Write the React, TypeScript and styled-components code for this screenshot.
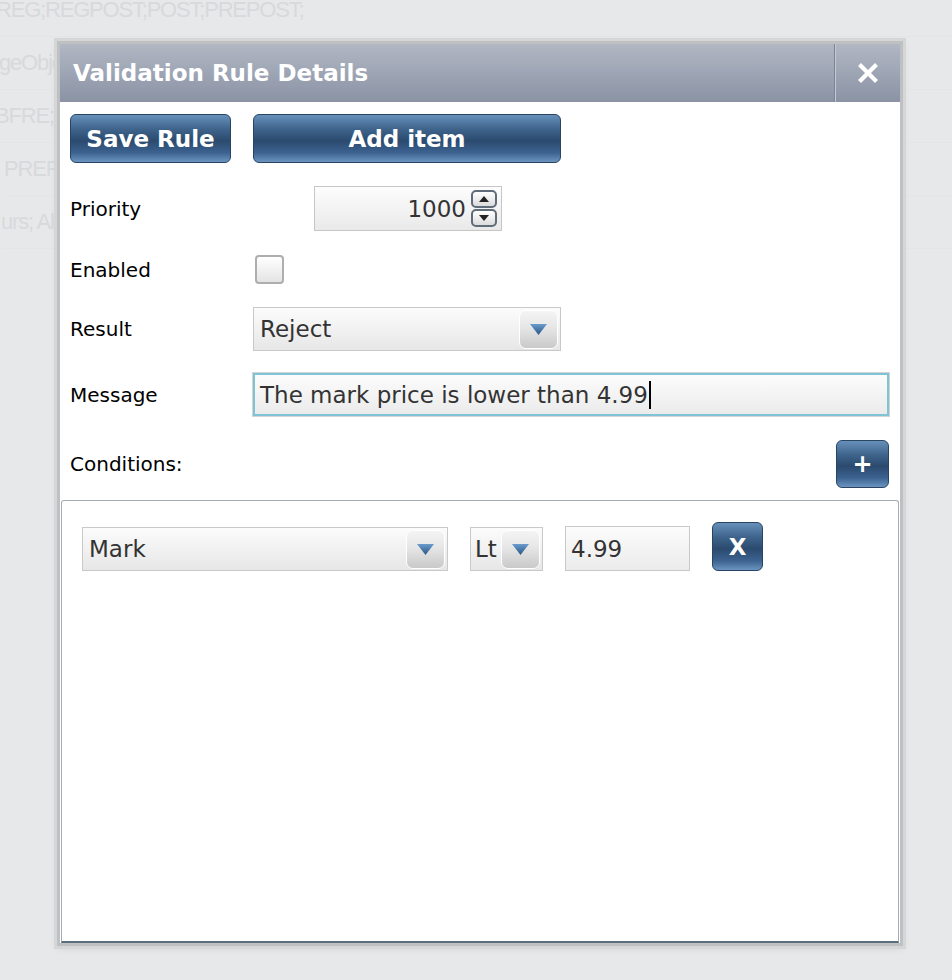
import React from "react";
import styled, { createGlobalStyle } from "styled-components";

const GlobalStyle = createGlobalStyle`
  html, body { margin: 0; padding: 0; background: #e7e8ea; }
  body { font-family: "DejaVu Sans", Verdana, sans-serif; }
`;

const Page = styled.div`
  position: relative;
  width: 952px;
  height: 980px;
  overflow: hidden;
  background: #e7e8ea;
`;

const BgList = styled.div`
  display: flex;
  flex-direction: column;
  margin-top: -16px;
`;

const BgRow = styled.div<{ $indent: number }>`
  height: 52px;
  line-height: 52px;
  border-bottom: 1px solid #e4e5e7;
  font-family: "Liberation Sans Narrow", "Liberation Sans", Arial, sans-serif;
  font-size: 22px;
  letter-spacing: -1.2px;
  color: #d8d9db;
  white-space: nowrap;
  margin-left: ${(p) => p.$indent}px;
`;

const Dialog = styled.div`
  position: absolute;
  left: 57px;
  top: 41px;
  width: 840px;
  height: 899px;
  border: 3px solid #bfc0c2;
  box-shadow: 0 0 0 3px #d5d6d8, 0 2px 8px rgba(0, 0, 0, 0.1);
  background: #fff;
  display: flex;
  flex-direction: column;
`;

const Header = styled.div`
  height: 58px;
  flex: none;
  display: flex;
  align-items: stretch;
  background: linear-gradient(#b1b7c3, #8a93a5);
`;

const Title = styled.div`
  flex: 1;
  display: flex;
  align-items: center;
  padding-left: 13px;
  color: #fff;
  font-weight: bold;
  font-size: 23px;
`;

const CloseBox = styled.div`
  width: 65px;
  border-left: 1px solid #7b8496;
  box-shadow: inset 1px 0 0 #c4c9d2;
  display: flex;
  align-items: center;
  justify-content: center;
`;

const Body = styled.div`
  flex: 1;
  display: flex;
  flex-direction: column;
  padding: 12px 11px 0 10px;
`;

const Toolbar = styled.div`
  display: flex;
  gap: 22px;
`;

const BlueButton = styled.div<{ $w: number; $h: number; $size?: number }>`
  width: ${(p) => p.$w}px;
  height: ${(p) => p.$h}px;
  box-sizing: border-box;
  border: 1px solid #2a4562;
  border-radius: 6px;
  background: linear-gradient(#6690ba 0%, #3f648c 30%, #2b4a6e 55%, #3c6290 80%, #6a94bf 100%);
  color: #fff;
  font-weight: bold;
  font-size: ${(p) => p.$size ?? 23}px;
  display: flex;
  align-items: center;
  justify-content: center;
  flex: none;
`;

const FieldRow = styled.div<{ $mt: number }>`
  display: flex;
  align-items: center;
  margin-top: ${(p) => p.$mt}px;
`;

const Label = styled.div`
  width: 183px;
  flex: none;
  font-size: 20px;
  color: #000;
`;

const Spinner = styled.div`
  margin-left: 61px;
  width: 188px;
  height: 45px;
  box-sizing: border-box;
  border: 1px solid #c6c6c6;
  background: linear-gradient(#fdfdfd, #e9e9e9);
  display: flex;
  align-items: center;
  justify-content: flex-end;
  padding-right: 4px;
`;

const ValueText = styled.span`
  font-size: 23px;
  color: #333;
`;

const SpinCol = styled.div`
  display: flex;
  flex-direction: column;
  gap: 1px;
  margin-left: 5px;
`;

const SpinBtn = styled.div`
  width: 26px;
  height: 18px;
  box-sizing: border-box;
  border: 2px solid #5f6c7a;
  border-radius: 5px;
  background: linear-gradient(#ffffff, #dcdcdc);
  display: flex;
  align-items: center;
  justify-content: center;
`;

const Checkbox = styled.div`
  margin-left: 2px;
  width: 29px;
  height: 29px;
  box-sizing: border-box;
  border: 2px solid #aeaeae;
  border-radius: 4px;
  background: linear-gradient(#ffffff, #e4e4e4);
`;

const Combo = styled.div<{ $w: number; $pl: number }>`
  width: ${(p) => p.$w}px;
  height: 44px;
  box-sizing: border-box;
  border: 1px solid #c9c9c9;
  background: linear-gradient(#fcfcfc, #e7e7e7);
  display: flex;
  align-items: center;
  padding-left: ${(p) => p.$pl}px;
  padding-right: 2px;
  flex: none;
`;

const ComboText = styled.span`
  flex: 1;
  font-size: 23px;
  color: #333;
  white-space: nowrap;
  overflow: hidden;
`;

const DropBtn = styled.div`
  width: 39px;
  height: 39px;
  box-sizing: border-box;
  border: 1px solid #ffffff;
  border-radius: 7px;
  background: linear-gradient(#f4f4f4 0%, #e6e6e6 45%, #c9c9c9 100%);
  display: flex;
  align-items: center;
  justify-content: center;
  flex: none;
`;

const TextInput = styled.div<{ $w?: number; $focus?: boolean }>`
  ${(p) => (p.$w ? `width: ${p.$w}px; flex: none;` : "flex: 1;")}
  height: ${(p) => (p.$focus ? 43 : 45)}px;
  box-sizing: border-box;
  border: ${(p) => (p.$focus ? "2px solid #7fc4d5" : "1px solid #c9c9c9")};
  box-shadow: ${(p) => (p.$focus ? "0 0 0 1px #d4d4d4" : "none")};
  background: linear-gradient(#fcfcfc, #ebebeb);
  display: flex;
  align-items: center;
  padding-left: 5px;
`;

const Caret = styled.span`
  display: inline-block;
  width: 2px;
  height: 28px;
  background: #000;
  margin-left: 1px;
`;

const ConditionsRow = styled.div`
  display: flex;
  align-items: center;
  justify-content: space-between;
  margin-top: 24px;
`;

const Panel = styled.div`
  flex: 1;
  margin: 12px -10px 0 -9px;
  border: 1px solid #a3acb6;
  border-bottom: 2px solid #5b6e7e;
  border-radius: 3px 3px 0 0;
  padding: 21px 20px;
`;

const CondRow = styled.div`
  display: flex;
  align-items: flex-end;
  gap: 22px;
`;

const Triangle = () => (
  <svg width="17" height="11" viewBox="0 0 17 11">
    <defs>
      <linearGradient id="tri" x1="0" y1="0" x2="0" y2="1">
        <stop offset="0" stopColor="#6a9ccd" />
        <stop offset="1" stopColor="#2a5685" />
      </linearGradient>
    </defs>
    <polygon points="0,0 17,0 8.5,11" fill="url(#tri)" />
  </svg>
);

const SmallArrow = ({ up }: { up?: boolean }) => (
  <svg width="10" height="6" viewBox="0 0 10 6">
    <polygon points={up ? "0,6 10,6 5,0" : "0,0 10,0 5,6"} fill="#222" />
  </svg>
);

const CloseIcon = () => (
  <svg width="20" height="20" viewBox="0 0 20 20">
    <path d="M3 3 L17 17 M17 3 L3 17" stroke="#fff" strokeWidth="4.2" strokeLinecap="square" />
  </svg>
);

const bgLines = [
  { t: "REG;REGPOST;POST;PREPOST;", i: -4 },
  { t: "geObject; ChangeObject; ChangeObjects", i: -1 },
  { t: "BFRE;BFRE;BFRE;BFRE;BFRE;", i: -5 },
  { t: "PREPOST;PREPOST;PREPOST;", i: 4 },
  { t: "urs; All hours; All hours;", i: 1 },
];

export default function App() {
  return (
    <Page>
      <GlobalStyle />
      <BgList>
        {bgLines.map((l, k) => (
          <BgRow key={k} $indent={l.i}>
            {l.t}
          </BgRow>
        ))}
      </BgList>
      <Dialog>
        <Header>
          <Title>Validation Rule Details</Title>
          <CloseBox>
            <CloseIcon />
          </CloseBox>
        </Header>
        <Body>
          <Toolbar>
            <BlueButton $w={161} $h={49}>Save Rule</BlueButton>
            <BlueButton $w={308} $h={49}>Add item</BlueButton>
          </Toolbar>
          <FieldRow $mt={23}>
            <Label>Priority</Label>
            <Spinner>
              <ValueText>1000</ValueText>
              <SpinCol>
                <SpinBtn>
                  <SmallArrow up />
                </SpinBtn>
                <SpinBtn>
                  <SmallArrow />
                </SpinBtn>
              </SpinCol>
            </Spinner>
          </FieldRow>
          <FieldRow $mt={24}>
            <Label>Enabled</Label>
            <Checkbox />
          </FieldRow>
          <FieldRow $mt={23}>
            <Label>Result</Label>
            <Combo $w={308} $pl={6}>
              <ComboText>Reject</ComboText>
              <DropBtn>
                <Triangle />
              </DropBtn>
            </Combo>
          </FieldRow>
          <FieldRow $mt={22}>
            <Label>Message</Label>
            <TextInput $focus>
              <ValueText>The mark price is lower than 4.99</ValueText>
              <Caret />
            </TextInput>
          </FieldRow>
          <ConditionsRow>
            <Label>Conditions:</Label>
            <BlueButton $w={53} $h={48} $size={24}>+</BlueButton>
          </ConditionsRow>
          <Panel>
            <CondRow>
              <Combo $w={366} $pl={6}>
                <ComboText>Mark</ComboText>
                <DropBtn>
                  <Triangle />
                </DropBtn>
              </Combo>
              <Combo $w={73} $pl={4}>
                <ComboText>Lt</ComboText>
                <DropBtn>
                  <Triangle />
                </DropBtn>
              </Combo>
              <TextInput $w={125}>
                <ValueText>4.99</ValueText>
              </TextInput>
              <BlueButton $w={51} $h={49}>X</BlueButton>
            </CondRow>
          </Panel>
        </Body>
      </Dialog>
    </Page>
  );
}
